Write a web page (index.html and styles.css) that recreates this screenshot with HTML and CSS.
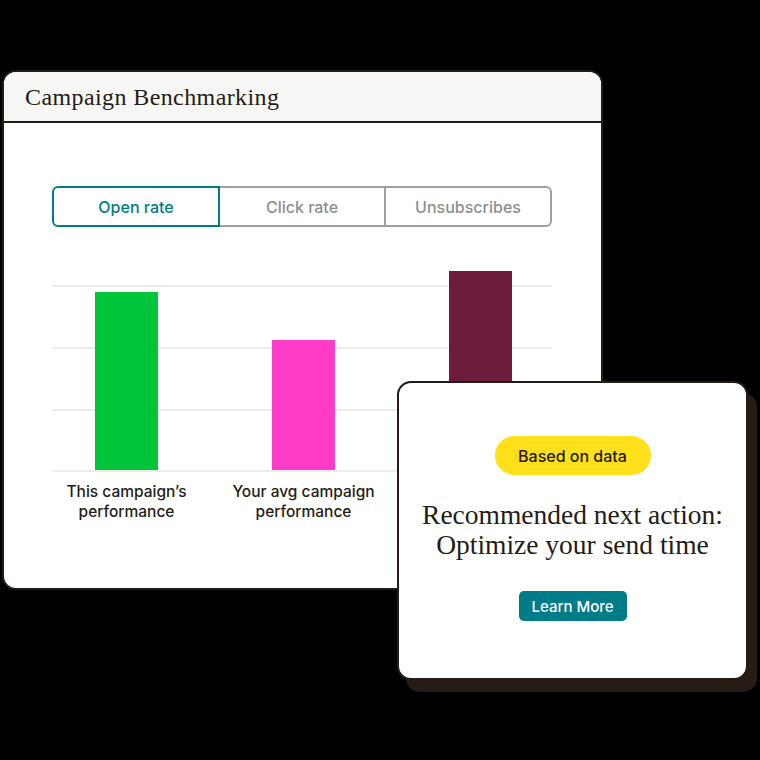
FILE: index.html
```html
<!DOCTYPE html>
<html>
<head>
<meta charset="utf-8">
<link rel="stylesheet" href="styles.css">
</head>
<body>
<div class="stage">
  <div class="panel">
    <div class="panel-head">
      <h1 class="panel-title">Campaign Benchmarking</h1>
    </div>
    <div class="panel-body">
      <div class="tabs">
        <div class="tab tab-active">Open rate</div>
        <div class="tab">Click rate</div>
        <div class="tab tab-last">Unsubscribes</div>
      </div>
      <div class="chart">
        <div class="bars">
          <div class="col"><div class="bar bar-green" style="height:178px"></div></div>
          <div class="col"><div class="bar bar-pink" style="height:130px"></div></div>
          <div class="col"><div class="bar bar-maroon" style="height:199px"></div></div>
        </div>
      </div>
      <div class="labels">
        <div class="label">This campaign’s<br>performance</div>
        <div class="label">Your avg campaign<br>performance</div>
        <div class="label"></div>
      </div>
    </div>
  </div>

  <div class="reco">
    <span class="badge">Based on data</span>
    <p class="reco-title">Recommended next action:<br>Optimize your send time</p>
    <span class="btn">Learn More</span>
  </div>
</div>
</body>
</html>
```

FILE: styles.css
```css
* { box-sizing: border-box; }
html, body { margin: 0; padding: 0; }
body {
  background: #000;
  width: 760px;
  height: 760px;
  overflow: hidden;
  font-family: "Inter", "Liberation Sans", sans-serif;
  color: #241c15;
}
.stage {
  position: relative;
  width: 760px;
  height: 760px;
  padding: 70px 0 0 2px;
}
.panel {
  width: 601px;
  height: 520px;
  background: #fff;
  border: 2px solid #241c15;
  border-radius: 14px;
  overflow: hidden;
}
.panel-head {
  height: 51px;
  background: #f6f6f4;
  border-bottom: 2px solid #241c15;
  display: flex;
  align-items: center;
  padding-left: 21px;
}
.panel-title {
  margin: 0;
  font-family: "Liberation Serif", serif;
  font-weight: 400;
  font-size: 24px;
  letter-spacing: 0.4px;
  color: #241c15;
  padding-top: 1px;
}
.panel-body {
  padding: 63px 48px 0 48px;
}
.tabs {
  display: flex;
  width: 500px;
  height: 41px;
}
.tab {
  flex: 1;
  display: flex;
  align-items: center;
  justify-content: center;
  font-size: 16px;
  font-weight: 500;
  color: #8e8e8e;
  border: 2px solid #a0a0a0;
  border-left-width: 0;
}
.tab-active {
  color: #007c89;
  border: 2px solid #007c89;
  border-radius: 6px 0 0 6px;
}
.tab-last {
  border-radius: 0 6px 6px 0;
}
.chart {
  margin-top: 40px;
  width: 500px;
  height: 205px;
  background:
    linear-gradient(#ededeb, #ededeb) 0 18px / 100% 2px no-repeat,
    linear-gradient(#ededeb, #ededeb) 0 80px / 100% 2px no-repeat,
    linear-gradient(#ededeb, #ededeb) 0 142px / 100% 2px no-repeat,
    linear-gradient(#ededeb, #ededeb) 0 203px / 100% 2px no-repeat;
}
.bars, .labels {
  display: grid;
  grid-template-columns: repeat(3, 177px);
  margin-left: -14px;
}
.bars { height: 203px; }
.col {
  display: flex;
  align-items: flex-end;
  justify-content: center;
}
.bar { width: 63px; }
.bar-green { background: #00c43a; }
.bar-pink { background: #ff3cc7; }
.bar-maroon { background: #6e1c3c; }
.labels {
  margin-top: 10px;
}
.label {
  text-align: center;
  font-size: 15.5px;
  line-height: 20px;
  font-weight: 500;
  color: #241c15;
}
.reco {
  position: absolute;
  left: 397px;
  top: 381px;
  width: 351px;
  height: 299px;
  background: #fff;
  border: 2px solid #241c15;
  border-radius: 14px;
  box-shadow: 9px 12px 0 #241c15;
  display: flex;
  flex-direction: column;
  align-items: center;
  padding-top: 53px;
}
.badge {
  display: flex;
  align-items: center;
  justify-content: center;
  width: 156px;
  height: 39px;
  border-radius: 20px;
  background: #ffe01b;
  font-size: 16px;
  font-weight: 500;
  color: #241c15;
}
.reco-title {
  margin: 25px 0 0;
  text-align: center;
  font-family: "Liberation Serif", serif;
  font-size: 27.5px;
  line-height: 30px;
  font-weight: 400;
  color: #241c15;
}
.btn {
  margin-top: 31px;
  display: flex;
  align-items: center;
  justify-content: center;
  width: 108px;
  height: 30px;
  border-radius: 5px;
  background: #007c89;
  color: #fff;
  font-size: 15px;
  font-weight: 500;
}
```
